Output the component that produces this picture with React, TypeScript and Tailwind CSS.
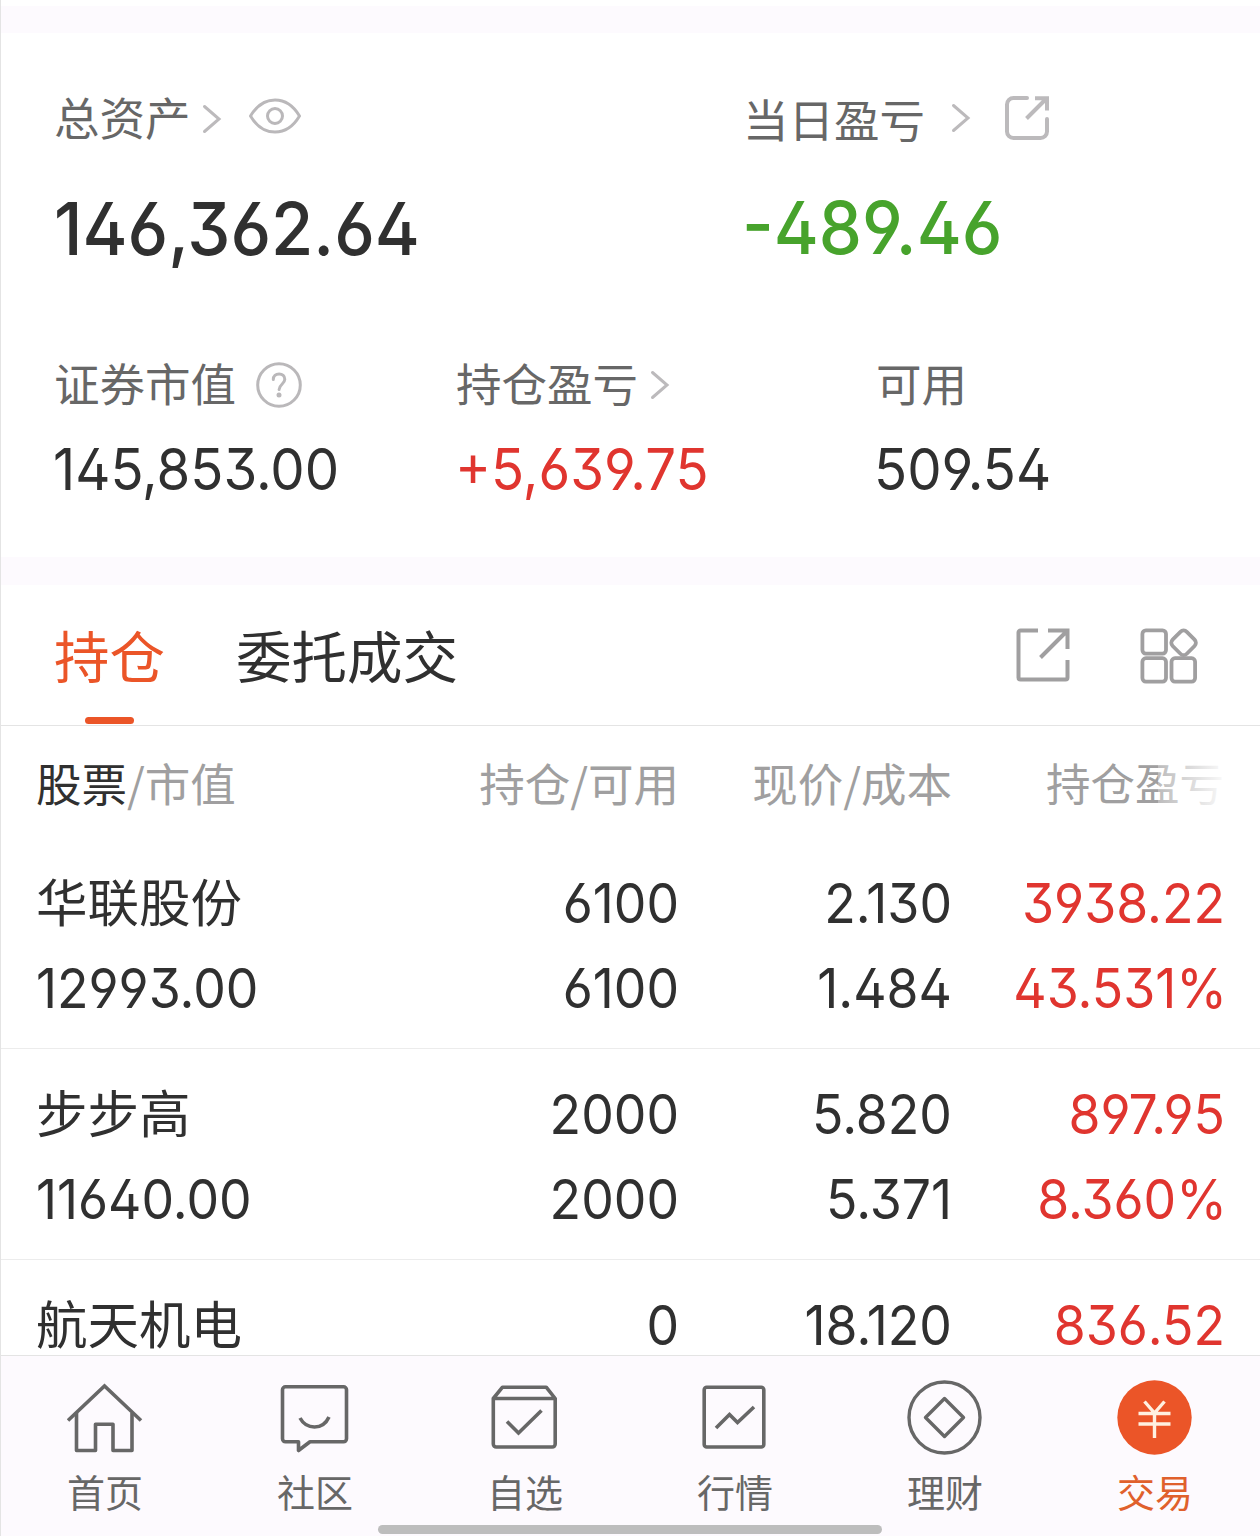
import type { ReactNode } from 'react'
import clsx from 'clsx'

type Holding = {
  name: string
  value?: string
  amount: string
  available?: string
  price: string
  cost?: string
  profit: string
  percent?: string
}

const holdings: Holding[] = [
  { name: '华联股份', value: '12993.00', amount: '6100', available: '6100', price: '2.130', cost: '1.484', profit: '3938.22', percent: '43.531%' },
  { name: '步步高', value: '11640.00', amount: '2000', available: '2000', price: '5.820', cost: '5.371', profit: '897.95', percent: '8.360%' },
  { name: '航天机电', amount: '0', price: '18.120', profit: '836.52' },
]

const ChevronIcon = ({ className }: { className?: string }) => (
  <svg className={clsx('h-[30px] w-[20px] shrink-0', className)} viewBox="0 0 20 30" fill="none" stroke="#bcbabc" strokeWidth="3" strokeLinecap="round">
    <path d="M2.5 2.5 17 15 2.5 27.5" />
  </svg>
)

const EyeIcon = () => (
  <svg className="h-[36px] w-[54px]" viewBox="0 0 54 36" fill="none" stroke="#bab8ba" strokeWidth="3">
    <path strokeLinejoin="round" d="M2.5 18C9 7 17 2 27 2s18 5 24.500 16C45 29 37 34 27 34S9 29 2.500 18Z" />
    <circle cx="27" cy="18" r="7.500" />
  </svg>
)

const ShareSmallIcon = () => (
  <svg className="h-[44px] w-[44px]" viewBox="0 0 44 44" fill="none" stroke="#bcbabc" strokeWidth="4" strokeLinecap="round">
    <path d="M22 2H8.500A6.500 6.500 0 0 0 2 8.500v27A6.500 6.500 0 0 0 8.500 42h27a6.500 6.500 0 0 0 6.500-6.500V23" />
    <path strokeLinecap="butt" d="M30 2.200h12v12.300M42 2 21.500 22.500" />
  </svg>
)

const HelpIcon = () => (
  <svg className="h-[46px] w-[46px]" viewBox="0 0 46 46" fill="none" stroke="#bab8ba" strokeWidth="3">
    <circle cx="23" cy="23" r="21.300" />
    <path strokeLinecap="round" d="M17.300 17.500c0-3.500 2.500-5.500 5.800-5.500s5.700 2 5.700 5.300c0 4.700-5.700 5.200-5.700 10.200" />
    <circle cx="23" cy="33" r="2.500" fill="#bab8ba" stroke="none" />
  </svg>
)

const ShareIcon = () => (
  <svg className="h-[54px] w-[54px]" viewBox="0 0 54 54" fill="none" stroke="#a09fa0" strokeWidth="4">
    <path strokeLinejoin="round" d="M22 2.500H4.500a2 2 0 0 0-2 2v45a2 2 0 0 0 2 2h45a2 2 0 0 0 2-2V32" />
    <path d="M32 2.500h19.500V21M51.500 2.500l-27 27" />
  </svg>
)

const GridIcon = () => (
  <svg className="h-[56px] w-[58px]" viewBox="0 0 58 56" fill="none" stroke="#a09fa0" strokeWidth="3.800">
    <rect x="2.400" y="2.400" width="23.600" height="23.200" rx="3.500" />
    <rect x="2.400" y="30.200" width="23.600" height="23.400" rx="3.500" />
    <rect x="31.500" y="30.200" width="23.600" height="23.400" rx="3.500" />
    <rect x="33.600" y="4.800" width="20" height="20" rx="4.500" transform="rotate(45 43.600 14.800)" />
  </svg>
)

const HomeIcon = () => (
  <svg className="h-[76px] w-[76px]" viewBox="0 0 76 76" fill="none" stroke="#676767" strokeWidth="3.600">
    <path d="M1 40.500 37.500 6 74 40.500" />
    <path strokeLinejoin="round" d="M9.500 33v37.500h19V44.200H46v26.300h19V33" />
  </svg>
)

const ChatIcon = () => (
  <svg className="h-[76px] w-[76px]" viewBox="0 0 76 76" fill="none" stroke="#676767" strokeWidth="3.600" strokeLinejoin="round">
    <path d="M8.500 6.800h58a3 3 0 0 1 3 3v49a3 3 0 0 1-3 3H33L21.500 70.500v-8.700h-13a3 3 0 0 1-3-3v-49a3 3 0 0 1 3-3Z" />
    <path d="M23 38c3 5.500 8 9 14.500 9S49 43.500 52 37" />
  </svg>
)

const PickIcon = () => (
  <svg className="h-[76px] w-[76px]" viewBox="0 0 76 76" fill="none" stroke="#676767" strokeWidth="3.600">
    <path strokeLinejoin="round" d="M6.300 18.500 15.500 7.200h43.700l9 11.300v45.500a3 3 0 0 1-3 3H9.300a3 3 0 0 1-3-3ZM6.300 18.500h61.900" />
    <path d="m20 41.500 11.500 11.500 23-22.500" />
  </svg>
)

const MarketIcon = () => (
  <svg className="h-[76px] w-[76px]" viewBox="0 0 76 76" fill="none" stroke="#676767" strokeWidth="3.600">
    <rect x="7.200" y="7.200" width="59.600" height="59.800" rx="2.500" />
    <path d="m19 48 13.500-13.500 8 8L57 27" />
  </svg>
)

const WealthIcon = () => (
  <svg className="h-[76px] w-[76px]" viewBox="0 0 76 76" fill="none" stroke="#676767" strokeWidth="3.400">
    <circle cx="37.500" cy="37.500" r="35.500" />
    <path strokeLinejoin="round" d="M37.500 18.500 56.500 37.500 37.500 56.500 18.500 37.500Z" />
  </svg>
)

const TradeIcon = () => (
  <svg className="h-[76px] w-[76px]" viewBox="0 0 76 76" fill="none" stroke="#fff0e0" strokeWidth="3.400">
    <circle cx="37.500" cy="37.500" r="37.200" fill="#eb5528" stroke="none" />
    <path d="M27.500 21.500 37.500 33 47.500 21.500M37.500 33v25M21.500 33.500h32M21.500 44h32" />
  </svg>
)

const navItems: { label: string; icon: ReactNode; active?: boolean }[] = [
  { label: '首页', icon: <HomeIcon /> },
  { label: '社区', icon: <ChatIcon /> },
  { label: '自选', icon: <PickIcon /> },
  { label: '行情', icon: <MarketIcon /> },
  { label: '理财', icon: <WealthIcon /> },
  { label: '交易', icon: <TradeIcon />, active: true },
]

// Slightly condensed figures with open 6 and 9
const Num = ({ className, children }: { className?: string; children: ReactNode }) => (
  <div className={clsx("scale-x-[0.94] whitespace-nowrap font-['Inter','Noto_Sans_CJK_SC',sans-serif] [font-feature-settings:'ss01','cv09']", className)}>{children}</div>
)

const HoldingRow = ({ item }: { item: Holding }) => (
  <div className="shrink-0 border-b border-[#ececec] pt-[35px] pb-[30px] pl-[35px] text-[55px] leading-[60px] text-[#303030] last:border-b-0 last:pb-0">
    <div className="grid h-[60px] grid-cols-[341px_302px_273px_273px]">
      <div className="-mt-[3px] text-[51.500px]">{item.name}</div>
      <Num className="origin-right text-right">{item.amount}</Num>
      <Num className="origin-right text-right">{item.price}</Num>
      <Num className="origin-right text-right text-[#e0352f]">{item.profit}</Num>
    </div>
    {item.value && (
      <div className="grid grid-cols-[341px_302px_273px_275px] pt-[25px]">
        <Num className="origin-left">{item.value}</Num>
        <Num className="origin-right text-right">{item.available}</Num>
        <Num className="origin-right text-right">{item.cost}</Num>
        <Num className="origin-right text-right text-[#e0352f]">{item.percent}</Num>
      </div>
    )}
  </div>
)

export default function App() {
  return (
    <main className="flex h-[1536px] w-[1260px] flex-col border-l border-[#e4e4e4] bg-white font-['Noto_Sans_CJK_SC',sans-serif] text-[#303030]">
      <div className="mt-[6px] h-[27px] shrink-0 bg-[#fdfafe]" />

      <section className="h-[524px] shrink-0 pl-[53px] text-[45.500px] text-[#676767]">
        <div className="grid grid-cols-[689px_1fr] pt-[53px]">
          <div>
            <div className="flex h-[60px] items-center leading-[60px]">
              总资产
              <ChevronIcon className="mt-[6px] ml-[11px]" />
              <div className="ml-[26px]"><EyeIcon /></div>
            </div>
            <Num className="mt-[43px] origin-left text-[73px] leading-[80px] font-medium text-[#303030]">146,362.64</Num>
          </div>
          <div>
            <div className="flex h-[60px] items-center pt-[3px] leading-[60px]">
              当日盈亏
              <ChevronIcon className="ml-[26px]" />
              <div className="ml-[34px]"><ShareSmallIcon /></div>
            </div>
            <Num className="mt-[42px] -ml-px origin-left text-[73px] leading-[80px] font-medium text-[#47a32c]">-489.46</Num>
          </div>
        </div>

        <div className="grid grid-cols-[402px_420px_1fr] pt-[83px]">
          <div>
            <div className="flex h-[60px] items-center leading-[60px]">
              证券市值
              <div className="mt-[6px] ml-[20px]"><HelpIcon /></div>
            </div>
            <Num className="mt-[17px] -ml-px origin-left text-[58px] leading-[80px] text-[#303030]">145,853.00</Num>
          </div>
          <div>
            <div className="flex h-[60px] items-center leading-[60px]">
              持仓盈亏
              <ChevronIcon className="mt-[6px] ml-[12px]" />
            </div>
            <Num className="mt-[17px] -ml-px origin-left text-[58px] leading-[80px] text-[#e0352f]">+5,639.75</Num>
          </div>
          <div>
            <div className="h-[60px] leading-[60px]">可用</div>
            <Num className="mt-[17px] -ml-[2px] origin-left text-[58px] leading-[80px] text-[#303030]">509.54</Num>
          </div>
        </div>
      </section>

      <div className="h-[28px] shrink-0 bg-[#fdfafe]" />

      <div className="flex h-[141px] shrink-0 items-start border-b border-[#e4e4e4] pl-[53px] text-[55.500px] leading-[80px]">
        <div className="flex flex-col items-center pt-[29px] text-[#eb5528]">
          持仓
          <span className="mt-[23px] h-[7px] w-[49px] rounded-full bg-[#eb5528]" />
        </div>
        <div className="ml-[71px] pt-[29px]">委托成交</div>
        <div className="mt-[43px] ml-auto flex gap-[70px] pr-[62px]">
          <ShareIcon />
          <GridIcon />
        </div>
      </div>

      <div className="grid h-[112px] shrink-0 grid-cols-[340px_302px_273px_273px] pt-[26px] pl-[35px] text-[45.500px] leading-[60px] text-[#a09fa0]">
        <div><span className="text-[#303030]">股票</span>/市值</div>
        <div className="-mr-px text-right">持仓/可用</div>
        <div className="-mr-px text-right">现价/成本</div>
        <div className="relative text-right text-[44.500px]">
          持仓盈亏
          <div className="absolute top-0 right-0 h-full w-[66px] bg-linear-to-r from-white/30 to-white/95" />
        </div>
      </div>

      <div className="flex h-[517px] shrink-0 flex-col">
        {holdings.map((item) => (
          <HoldingRow key={item.name} item={item} />
        ))}
      </div>

      <nav className="relative -ml-px h-[181px] shrink-0 border-t border-l border-[#e4e4e4] bg-[#fdfafe] text-[38px] text-[#676767]">
        <div className="-ml-px grid grid-cols-6">
          {navItems.map((item) => (
            <div key={item.label} className={clsx('flex flex-col items-center pt-[24px] leading-[50px]', item.active && 'text-[#e0602c]')}>
              {item.icon}
              <div className="mt-[10px]">{item.label}</div>
            </div>
          ))}
        </div>
        <div className="absolute bottom-[2px] left-[377px] h-[9px] w-[504px] rounded-full bg-[#bdbdbd]" />
      </nav>
    </main>
  )
}
